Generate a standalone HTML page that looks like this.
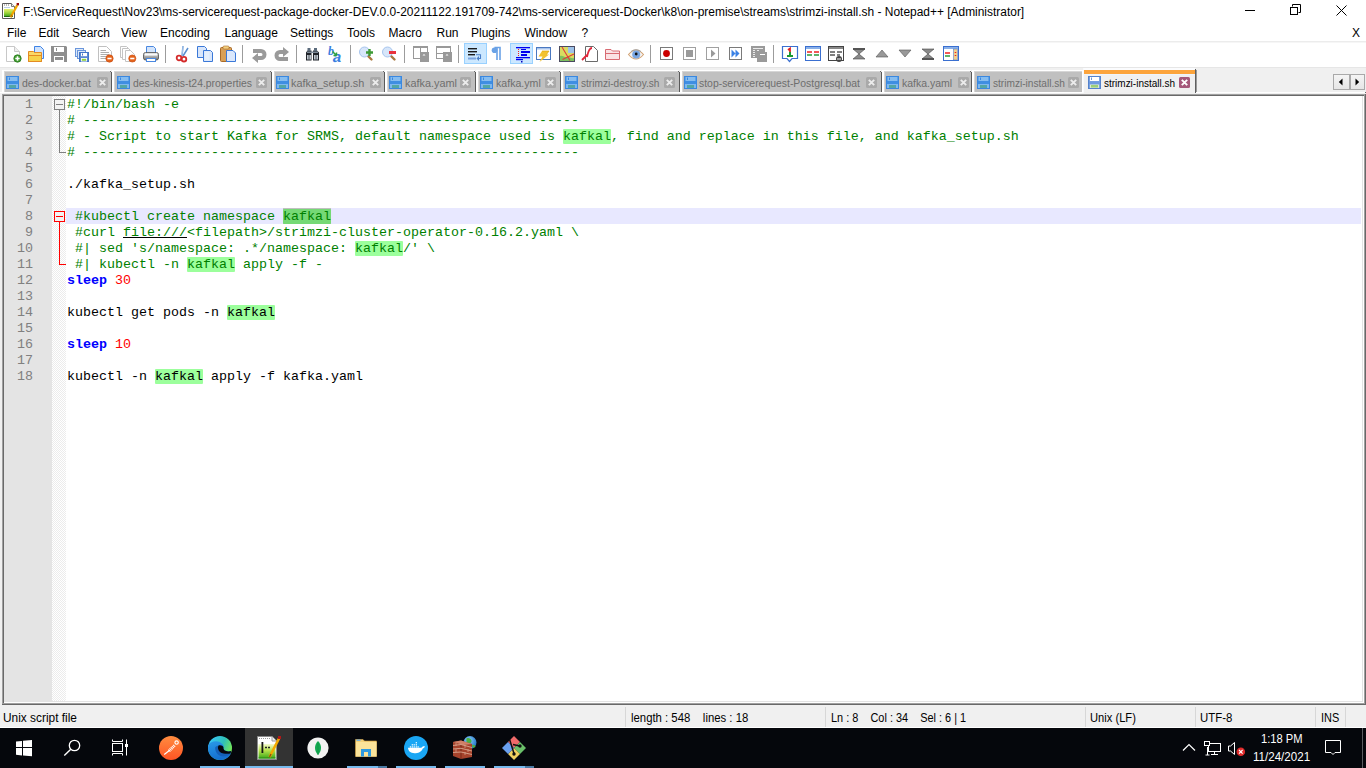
<!DOCTYPE html><html><head><meta charset="utf-8"><style>
*{margin:0;padding:0;box-sizing:border-box}
html,body{width:1366px;height:768px;overflow:hidden;background:#fff}
body{position:relative;font-family:"Liberation Sans",sans-serif;font-size:12px;color:#000}
.t{position:absolute;white-space:pre;line-height:14px}
.m{position:absolute;white-space:pre;font-family:"Liberation Mono",monospace;font-size:13.333px;line-height:16px}
svg{position:absolute;overflow:visible}
</style></head><body>
<div class="t" style="left:23px;top:5px;transform-origin:0 0;transform:scaleX(0.995)">F:\ServiceRequest\Nov23\ms-servicerequest-package-docker-DEV.0.0-20211122.191709-742\ms-servicerequest-Docker\k8\on-premise\streams\strimzi-install.sh - Notepad++ [Administrator]</div>
<svg style="left:2px;top:3px" width="18" height="17" viewBox="0 0 18 17">
<defs><linearGradient id="tg" x1="0" y1="0" x2="0" y2="1"><stop offset="0" stop-color="#e8f070"/><stop offset="0.5" stop-color="#9bd43a"/><stop offset="1" stop-color="#2f9a1a"/></linearGradient></defs>
<path d="M0.5 0.5H9.5L12.5 3.5V15.5H0.5Z" fill="#fff" stroke="#5a5a5a"/>
<path d="M9.5 0.5V3.5H12.5" fill="#f0f0f0" stroke="#7a7a7a"/>
<path d="M2 2H8" stroke="#777" stroke-dasharray="1 1"/>
<path d="M2 4.5H8" stroke="#bcd0e8"/>
<rect x="2" y="6" width="9" height="8" fill="url(#tg)"/>
<rect x="2" y="13" width="9" height="1" fill="#1f6a10"/>
<path d="M8.6 14.2L15.2 2.2" stroke="#f2a900" stroke-width="2.3"/>
<path d="M8.6 14.2L10 11.6" stroke="#c47a00" stroke-width="1.5"/>
<rect x="14.6" y="0" width="2.4" height="2.4" fill="#9a0a0a"/>
</svg>
<div style="position:absolute;left:1245px;top:10px;width:10px;height:1px;background:#000"></div>
<div style="position:absolute;left:1290px;top:7px;width:8px;height:8px;border:1px solid #000"></div>
<svg style="left:1290px;top:4px" width="12" height="12"><path d="M2.5 2.5V0.5H10.5V8.5H8.5" fill="none" stroke="#000"/></svg>
<svg style="left:1336px;top:5px" width="11" height="11"><path d="M0.5 0.5L10.5 10.5M10.5 0.5L0.5 10.5" stroke="#000" stroke-width="1"/></svg>
<div class="t" style="left:7px;top:26px;">File</div>
<div class="t" style="left:38.5px;top:26px;">Edit</div>
<div class="t" style="left:72px;top:26px;">Search</div>
<div class="t" style="left:121px;top:26px;">View</div>
<div class="t" style="left:160px;top:26px;">Encoding</div>
<div class="t" style="left:224.5px;top:26px;">Language</div>
<div class="t" style="left:290px;top:26px;">Settings</div>
<div class="t" style="left:347px;top:26px;">Tools</div>
<div class="t" style="left:388.5px;top:26px;">Macro</div>
<div class="t" style="left:436.5px;top:26px;">Run</div>
<div class="t" style="left:471px;top:26px;">Plugins</div>
<div class="t" style="left:524.5px;top:26px;">Window</div>
<div class="t" style="left:581.5px;top:26px;">?</div>
<div class="t" style="left:1352px;top:26px;">X</div>
<div style="position:absolute;left:0px;top:41px;width:1366px;height:1px;background:#ececec"></div>
<div style="position:absolute;left:0px;top:42px;width:1366px;height:1px;background:#f6f6f6"></div>
<div style="position:absolute;left:0px;top:67px;width:1366px;height:1px;background:#e6e6e6"></div>
<div style="position:absolute;left:165px;top:45px;width:1px;height:18px;background:#9c9c9c"></div>
<div style="position:absolute;left:242px;top:45px;width:1px;height:18px;background:#9c9c9c"></div>
<div style="position:absolute;left:296px;top:45px;width:1px;height:18px;background:#9c9c9c"></div>
<div style="position:absolute;left:350px;top:45px;width:1px;height:18px;background:#9c9c9c"></div>
<div style="position:absolute;left:404px;top:45px;width:1px;height:18px;background:#9c9c9c"></div>
<div style="position:absolute;left:458px;top:45px;width:1px;height:18px;background:#9c9c9c"></div>
<div style="position:absolute;left:650px;top:45px;width:1px;height:18px;background:#9c9c9c"></div>
<div style="position:absolute;left:773px;top:45px;width:1px;height:18px;background:#9c9c9c"></div>
<div style="position:absolute;left:464px;top:43px;width:23px;height:21px;background:#cce8ff;border:1px solid #99d1ff"></div>
<div style="position:absolute;left:510px;top:43px;width:23px;height:21px;background:#cce8ff;border:1px solid #99d1ff"></div>
<svg style="left:6px;top:46px" width="16" height="16" viewBox="0 0 16 16"><path d="M0.5 0.5H8.5L13.5 5.5V15.5H0.5Z" fill="#fff" stroke="#c8c8c8"/><path d="M8.5 0.5V5.5H13.5" fill="#eee" stroke="#c8c8c8"/><circle cx="11.5" cy="12.5" r="3.7" fill="#3f9b2d" stroke="#2b7a1e" stroke-width="0.8"/><path d="M11.5 10.3V14.7M9.3 12.5H13.7" stroke="#fff" stroke-width="1.6"/></svg>
<svg style="left:28px;top:46px" width="16" height="16" viewBox="0 0 16 16"><path d="M6.5 0.5H12.5L15.5 3.5V12.5H6.5Z" fill="#cfe2fc" stroke="#3d83e6"/><path d="M0.5 5.5H5.5L6.5 6.5H13.5V15.5H0.5Z" fill="#fbd866" stroke="#e38b22"/><rect x="1" y="9" width="12" height="6" fill="#f6d24a"/><path d="M0.5 9.5H13.5V15.5H0.5Z" fill="none" stroke="#e38b22"/></svg>
<svg style="left:51px;top:46px" width="16" height="16" viewBox="0 0 16 16"><path d="M0 0H15L16 1V16H0Z" fill="#8e8e8e"/><rect x="3" y="1" width="10" height="5" fill="#fff"/><rect x="5" y="2" width="1" height="3" fill="#8e8e8e"/><rect x="3" y="10" width="10" height="6" fill="#fff"/><rect x="4" y="11" width="8" height="3" fill="#8e8e8e"/></svg>
<svg style="left:74px;top:47px" width="16" height="16" viewBox="0 0 16 16"><rect x="1.5" y="1.5" width="8" height="8" fill="#dbe7f8" stroke="#6a96dc"/><rect x="3.5" y="3.5" width="8" height="8" fill="#dbe7f8" stroke="#6a96dc"/><rect x="5.5" y="5.5" width="9" height="9" fill="#5a88d4" stroke="#4476c8"/><rect x="7" y="6" width="6" height="3.2" fill="#fff"/><rect x="8" y="6.5" width="1" height="2" fill="#4476c8"/><rect x="7" y="11" width="6" height="3.5" fill="#fff"/><rect x="7.8" y="11.8" width="4.4" height="2" fill="#8ed040"/></svg>
<svg style="left:98px;top:46px" width="16" height="16" viewBox="0 0 16 16"><path d="M0.5 0.5H8.5L13.5 5.5V15.5H0.5Z" fill="#fff" stroke="#c0c0c0"/><path d="M2.5 4.5H8M2.5 6.5H11M2.5 8.5H11M2.5 10.5H8M2.5 12.5H8" stroke="#8a8a8a" stroke-width="0.7" fill="none"/><circle cx="11.5" cy="12.5" r="3.7" fill="#e4621a" stroke="#c84c10" stroke-width="0.6"/><path d="M9.4 12.5H13.6" stroke="#fff" stroke-width="1.6"/></svg>
<svg style="left:120px;top:46px" width="16" height="16" viewBox="0 0 16 16"><path d="M0.5 0.5H6.5L9.5 3.5V11.5H0.5Z" fill="#fff" stroke="#c4c4c4"/><path d="M2.5 2.5H8.5L11.5 5.5V13.5H2.5Z" fill="#fff" stroke="#c4c4c4"/><path d="M5.5 4.5H10.5L14.5 8.5V15.5H5.5Z" fill="#fff" stroke="#c4c4c4"/><circle cx="12.3" cy="12.5" r="3.6" fill="#e4621a" stroke="#c84c10" stroke-width="0.6"/><path d="M10.2 12.5H14.4" stroke="#fff" stroke-width="1.6"/></svg>
<svg style="left:143px;top:46px" width="16" height="16" viewBox="0 0 16 16"><defs><linearGradient id="prg" x1="0" y1="0" x2="0" y2="1"><stop offset="0" stop-color="#f4f4f4"/><stop offset="0.5" stop-color="#b0b0b0"/><stop offset="1" stop-color="#707070"/></linearGradient></defs><path d="M3.5 0.5H10.5L12.5 2.5V8H3.5Z" fill="#d3e4fb" stroke="#4a88e0"/><rect x="0.5" y="6.5" width="15" height="7.5" rx="2" fill="url(#prg)" stroke="#4a4a4a" stroke-width="0.8"/><rect x="2" y="8" width="12" height="1.5" fill="#fafafa"/><rect x="3.5" y="12.5" width="9" height="3" fill="#fff" stroke="#4a88e0"/></svg>
<svg style="left:176px;top:46px" width="16" height="16" viewBox="0 0 16 16"><path d="M6 10L7 0M7 10L12 2" stroke="#5a8fd0" stroke-width="1.5"/><path d="M6 10L7 0" stroke="#d8e8fa" stroke-width="0.6"/><circle cx="3" cy="12" r="2.3" fill="none" stroke="#d42b2b" stroke-width="1.8"/><circle cx="8" cy="13.2" r="2.3" fill="none" stroke="#d42b2b" stroke-width="1.8"/></svg>
<svg style="left:197px;top:46px" width="16" height="16" viewBox="0 0 16 16"><path d="M0.5 0.5H7.5L9.5 2.5V11.5H0.5Z" fill="#d8e6fb" stroke="#3a78d8"/><path d="M6.5 4.5H13.5L15.5 6.5V15.5H6.5Z" fill="#d8e6fb" stroke="#3a78d8"/><rect x="7.5" y="5.5" width="5" height="9" fill="#fff" opacity="0.35"/></svg>
<svg style="left:220px;top:46px" width="16" height="16" viewBox="0 0 16 16"><rect x="0.5" y="1.5" width="11" height="14" rx="1" fill="#d9a056" stroke="#a86a28"/><rect x="3" y="0" width="6" height="3" rx="1" fill="#f2d080" stroke="#a86a28" stroke-width="0.6"/><path d="M6.5 4.5H13L15.5 7V15.5H6.5Z" fill="#dbe8fc" stroke="#3a78d8"/></svg>
<svg style="left:251px;top:47px" width="16" height="16" viewBox="0 0 16 16"><path d="M2 2H10A5.5 5.5 0 0 1 10 13H7V16L1 11L7 6V9H10A1.5 1.5 0 0 0 10 6H2Z" fill="#9a9a9a"/></svg>
<svg style="left:274px;top:47px" width="16" height="16" viewBox="0 0 16 16"><path d="M14 14H6A5.5 5.5 0 0 1 6 3H9V0L15 5L9 10V7H6A1.5 1.5 0 0 0 6 10H14Z" fill="#9a9a9a"/></svg>
<svg style="left:305px;top:47px" width="16" height="16" viewBox="0 0 16 16"><path d="M1 5.5L2.5 3.5H6.5V13.5H1Z M8 3.5H12L14 5.5V13.5H8Z" fill="#20242a"/><rect x="2.5" y="1" width="3" height="3" fill="#5b6b7c"/><rect x="9" y="1" width="3" height="3" fill="#5b6b7c"/><rect x="2" y="4.5" width="11" height="1.5" fill="#7d8a98"/><rect x="2" y="8" width="4" height="4.5" fill="#c0c8d0"/><rect x="9" y="8" width="4" height="4.5" fill="#c0c8d0"/><path d="M4 8V12.5M11 8V12.5" stroke="#3a3f46" stroke-width="0.8"/></svg>
<svg style="left:328px;top:46px" width="16" height="16" viewBox="0 0 16 16"><text x="0" y="8.5" font-family="Liberation Serif" font-style="italic" font-weight="bold" font-size="12" fill="#3a7fe0">b</text><text x="5" y="16" font-family="Liberation Sans" font-weight="bold" font-size="15" fill="#3a7fe0" transform="skewX(-12) translate(2.5 0)">a</text><path d="M4.5 5.5L8.5 9.5M8.5 9.5V6.5M8.5 9.5H5.5" stroke="#2ea040" stroke-width="1.5" fill="none"/></svg>
<svg style="left:359px;top:46px" width="16" height="16" viewBox="0 0 16 16"><path d="M9 10L12.5 13.5" stroke="#a9773e" stroke-width="2.4" stroke-linecap="round"/><circle cx="5.5" cy="6" r="5" fill="#d7e6fa" stroke="#a7c5ee"/><path d="M10.5 3V10M7 6.5H14" stroke="#3d9a35" stroke-width="2.4"/></svg>
<svg style="left:382px;top:46px" width="16" height="16" viewBox="0 0 16 16"><path d="M9 10L12.5 13.5" stroke="#a9773e" stroke-width="2.4" stroke-linecap="round"/><circle cx="5.5" cy="6" r="5" fill="#d7e6fa" stroke="#a7c5ee"/><rect x="7" y="5" width="7" height="3" fill="#e8323c"/></svg>
<svg style="left:413px;top:46px" width="16" height="16" viewBox="0 0 16 16"><rect x="0.5" y="0.5" width="14" height="12" fill="#fff" stroke="#999"/><rect x="0" y="0" width="15" height="2" fill="#999"/><path d="M7.5 2V13" stroke="#999"/><rect x="7" y="6" width="9" height="10" fill="#999"/><path d="M9.5 9.5L11 8L12.5 9.5Z" fill="#fff"/></svg>
<svg style="left:436px;top:46px" width="16" height="16" viewBox="0 0 16 16"><rect x="0.5" y="0.5" width="14" height="12" fill="#fff" stroke="#999"/><rect x="0" y="0" width="15" height="2" fill="#999"/><path d="M0 7.5H15" stroke="#999"/><rect x="7" y="6" width="9" height="10" fill="#999"/><path d="M9.5 9.5L11 8L12.5 9.5Z" fill="#fff"/></svg>
<svg style="left:467px;top:45px" width="16" height="16" viewBox="0 0 16 16"><rect x="1" y="3" width="9" height="1.4" fill="#1a1a1a"/><rect x="1" y="6" width="9" height="1.4" fill="#1a1a1a"/><rect x="1" y="9" width="7" height="1.4" fill="#1a1a1a"/><path d="M9 9.7H13.5V13.5H11" stroke="#4a7fc8" stroke-width="1.1" fill="none"/><path d="M9.5 13.5L12 11V16Z" fill="#4a7fc8"/><rect x="1" y="12.5" width="8" height="2" fill="#7aa4e0"/></svg>
<svg style="left:490px;top:46px" width="16" height="16" viewBox="0 0 16 16"><path d="M4.5 1.5H10V14M7 1.5V14" stroke="#6aa2e6" stroke-width="1.6" fill="none"/><circle cx="4.5" cy="4.2" r="2.8" fill="#6aa2e6"/></svg>
<svg style="left:513px;top:46px" width="16" height="16" viewBox="0 0 16 16"><rect x="3" y="1" width="14" height="1.3" fill="#0000f0"/><rect x="8" y="3" width="5" height="1" fill="#0000f0"/><rect x="8" y="5" width="9" height="2" fill="#0000f0"/><rect x="8" y="8" width="6" height="2" fill="#0000f0"/><rect x="3" y="11" width="14" height="1.3" fill="#0000f0"/><rect x="3" y="13" width="7" height="1.2" fill="#0000f0"/><rect x="8" y="15" width="1.5" height="1.5" fill="#0000c0"/><path d="M5.5 3V10" stroke="#e22" stroke-width="1" stroke-dasharray="1 1"/></svg>
<svg style="left:536px;top:47px" width="16" height="16" viewBox="0 0 16 16"><rect x="0.5" y="0.5" width="14" height="12" fill="#fff" stroke="#4a78c0"/><rect x="1" y="1" width="13" height="1.5" fill="#a8c4ec"/><path d="M6 4H13L10.5 7.5H13L3.5 15L6.5 9.5H2.5Z" fill="#f2c230"/><path d="M6 4H13L10.5 7.5" stroke="#d9a000" stroke-width="0.6" fill="none"/></svg>
<svg style="left:559px;top:46px" width="16" height="16" viewBox="0 0 16 16"><rect x="0.5" y="0.5" width="15" height="15" fill="#d8dc60" stroke="#4a4a60"/><rect x="9" y="1" width="6" height="6" fill="#9ec2e8"/><path d="M1 10C4 9 6 12 8 11C10 10 12 13 15 12V15H1Z" fill="#7cc060"/><path d="M3 1L11 14.5M3.5 13.5L15 8" stroke="#e23b3b" stroke-width="1.1"/></svg>
<svg style="left:582px;top:46px" width="16" height="16" viewBox="0 0 16 16"><path d="M3.5 0.5H11.5L15.5 4.5V15.5H3.5Z" fill="#fff" stroke="#6a6a6a"/><path d="M0 14L5 9M5 11C6 6 7 2 10 2" stroke="#e0283a" stroke-width="1.8" fill="none"/></svg>
<svg style="left:605px;top:48px" width="16" height="16" viewBox="0 0 16 16"><path d="M0.5 1.5H6L7.5 3H14.5V11.5H0.5Z" fill="#fbe2e4" stroke="#d86a72"/><path d="M0.5 5.5H14.5" stroke="#d86a72"/></svg>
<svg style="left:628px;top:48px" width="16" height="16" viewBox="0 0 16 16"><path d="M0.5 6.5Q8 -2.5 15.5 6.5Q8 15.5 0.5 6.5Z" fill="#f4f4f4" stroke="#d2a070" stroke-width="1.1"/><path d="M3 3.5Q8 0 13 3.5" stroke="#a0a0a0" fill="none"/><circle cx="8.2" cy="6.5" r="4" fill="#7aa6e2"/><circle cx="8.2" cy="6" r="1.4" fill="#111"/></svg>
<svg style="left:659px;top:46px" width="16" height="16" viewBox="0 0 16 16"><rect x="1.5" y="1.5" width="12" height="12" fill="#fff" stroke="#7a7a7a"/><circle cx="7.5" cy="7.5" r="3.4" fill="#cc0000"/></svg>
<svg style="left:682px;top:46px" width="16" height="16" viewBox="0 0 16 16"><rect x="1.5" y="1.5" width="12" height="12" fill="#fff" stroke="#a0a0a0"/><rect x="4" y="4" width="7" height="7" fill="#9a9a9a"/></svg>
<svg style="left:705px;top:46px" width="16" height="16" viewBox="0 0 16 16"><rect x="1.5" y="1.5" width="12" height="12" fill="#fff" stroke="#a0a0a0"/><path d="M6 3.5L10.5 7.5L6 11.5Z" fill="#9a9a9a"/></svg>
<svg style="left:728px;top:46px" width="16" height="16" viewBox="0 0 16 16"><rect x="1.5" y="1.5" width="12" height="12" fill="#fff" stroke="#7a7a7a"/><path d="M3.5 3.5L7.5 7.5L3.5 11.5ZM7.5 3.5L11.5 7.5L7.5 11.5Z" fill="#3a82e6"/></svg>
<svg style="left:751px;top:46px" width="16" height="16" viewBox="0 0 16 16"><rect x="0" y="0" width="14" height="12" fill="#9a9a9a"/><path d="M2 2.5H12M2 4.5H4M6 4.5H8M2 6.5H4M2 8.5H4M2 10.5H4" stroke="#fff" stroke-width="0.8"/><rect x="6" y="6" width="10" height="10" fill="#9a9a9a"/><path d="M9 8.5H14" stroke="#fff" stroke-width="1"/></svg>
<svg style="left:782px;top:46px" width="16" height="16" viewBox="0 0 16 16"><path d="M0.5 0.5H15.5V12.5H10L7.5 15.5L5 12.5H0.5Z" fill="#fff" stroke="#3a6fd0" stroke-width="1.2"/><path d="M6 4L8 2.5V6" stroke="#e02020" stroke-width="1.8" fill="none"/><rect x="7" y="6" width="2" height="3" fill="#1a9a30"/><rect x="5" y="9" width="6" height="2" fill="#1a9a30"/></svg>
<svg style="left:805px;top:46px" width="16" height="16" viewBox="0 0 16 16"><rect x="0.5" y="0.5" width="15" height="14" fill="#fff" stroke="#3a6fd0"/><rect x="1" y="1" width="14" height="2" fill="#8ab0e8"/><path d="M2 6H7M9 6H14" stroke="#e22" stroke-width="1.5"/><path d="M2 9H7M9 9H14" stroke="#2a9a3a" stroke-width="1.5"/></svg>
<svg style="left:828px;top:46px" width="16" height="16" viewBox="0 0 16 16"><rect x="0.5" y="0.5" width="15" height="14" fill="#fff" stroke="#444"/><rect x="1" y="1" width="14" height="2" fill="#888"/><path d="M2 6H7M9 6H14M2 9H7M9 9H12" stroke="#555" stroke-width="1.5"/><circle cx="11" cy="13" r="3" fill="#444"/><path d="M9 13H13" stroke="#fff"/></svg>
<svg style="left:852px;top:46px" width="16" height="16" viewBox="0 0 16 16"><path d="M1 3H13L7 8L13 13H1L7 8Z" fill="#8a8a8a" stroke="#444" stroke-width="0.6"/><rect x="1" y="2" width="12" height="2" fill="#555"/></svg>
<svg style="left:875px;top:46px" width="16" height="16" viewBox="0 0 16 16"><path d="M1 11L7 4L13 11Z" fill="#999" stroke="#555" stroke-width="0.6"/></svg>
<svg style="left:898px;top:46px" width="16" height="16" viewBox="0 0 16 16"><path d="M1 4L7 11L13 4Z" fill="#999" stroke="#555" stroke-width="0.6"/></svg>
<svg style="left:921px;top:46px" width="16" height="16" viewBox="0 0 16 16"><path d="M1 3H13L7 8L13 13H1L7 8Z" fill="#8a8a8a" stroke="#444" stroke-width="0.6"/><rect x="1" y="12" width="12" height="2" fill="#555"/></svg>
<svg style="left:943px;top:46px" width="16" height="16" viewBox="0 0 16 16"><rect x="0.5" y="0.5" width="15" height="14" fill="#fff" stroke="#3a6fd0"/><rect x="1" y="1" width="14" height="2" fill="#8ab0e8"/><rect x="10.5" y="3" width="4" height="11" fill="#f5d08a" stroke="#3a6fd0" stroke-width="0.5"/><path d="M2 7H7" stroke="#e22" stroke-width="1.5"/><path d="M2 10H7" stroke="#2a9a3a" stroke-width="1.5"/><path d="M12.5 6V7M12.5 9V10" stroke="#e22" stroke-width="1.5"/></svg>
<div style="position:absolute;left:0px;top:68px;width:1366px;height:26px;background:#f0f0f0"></div>
<div style="position:absolute;left:0px;top:92px;width:1366px;height:1px;background:#fff"></div>
<div style="position:absolute;left:2px;top:70px;width:109px;height:1px;background:#fff"></div>
<div style="position:absolute;left:2px;top:70px;width:2px;height:22px;background:#fff"></div>
<div style="position:absolute;left:4px;top:71px;width:107px;height:1px;background:#d6d6d6"></div>
<div style="position:absolute;left:4px;top:72px;width:1px;height:20px;background:#d6d6d6"></div>
<div style="position:absolute;left:5px;top:72px;width:106px;height:20px;background:#c0c0c0"></div>
<div style="position:absolute;left:111px;top:72px;width:1px;height:20px;background:#5a5a5a"></div>
<div style="position:absolute;left:110px;top:71px;width:1px;height:1px;background:#6a6a6a"></div>
<svg style="left:6px;top:76px" width="13" height="13" viewBox="0 0 13 13"><rect x="0" y="0" width="13" height="13" fill="#3a88e0"/><rect x="1.5" y="1" width="10" height="4" fill="#86bdf0"/><rect x="3" y="1.5" width="1" height="2.5" fill="#3a88e0"/><rect x="1" y="5" width="11" height="3" fill="#3f8ee2"/><rect x="1" y="8" width="11" height="4" fill="#7fb8ee"/><rect x="3" y="9" width="7" height="3" fill="#52a6a6"/></svg>
<svg style="left:97px;top:77px" width="11" height="11" viewBox="0 0 11 11"><rect x="0" y="0" width="11" height="11" rx="1.5" fill="#a9a9a9"/><path d="M2.8 2.8L8.2 8.2M8.2 2.8L2.8 8.2" stroke="#ececec" stroke-width="1.9"/></svg>
<div style="position:absolute;left:112px;top:70px;width:159px;height:1px;background:#fff"></div>
<div style="position:absolute;left:112px;top:70px;width:2px;height:22px;background:#fff"></div>
<div style="position:absolute;left:114px;top:71px;width:157px;height:1px;background:#d6d6d6"></div>
<div style="position:absolute;left:114px;top:72px;width:1px;height:20px;background:#d6d6d6"></div>
<div style="position:absolute;left:115px;top:72px;width:156px;height:20px;background:#c0c0c0"></div>
<div style="position:absolute;left:271px;top:72px;width:1px;height:20px;background:#5a5a5a"></div>
<div style="position:absolute;left:270px;top:71px;width:1px;height:1px;background:#6a6a6a"></div>
<svg style="left:117px;top:76px" width="13" height="13" viewBox="0 0 13 13"><rect x="0" y="0" width="13" height="13" fill="#3a88e0"/><rect x="1.5" y="1" width="10" height="4" fill="#86bdf0"/><rect x="3" y="1.5" width="1" height="2.5" fill="#3a88e0"/><rect x="1" y="5" width="11" height="3" fill="#3f8ee2"/><rect x="1" y="8" width="11" height="4" fill="#7fb8ee"/><rect x="3" y="9" width="7" height="3" fill="#52a6a6"/></svg>
<svg style="left:256px;top:77px" width="11" height="11" viewBox="0 0 11 11"><rect x="0" y="0" width="11" height="11" rx="1.5" fill="#a9a9a9"/><path d="M2.8 2.8L8.2 8.2M8.2 2.8L2.8 8.2" stroke="#ececec" stroke-width="1.9"/></svg>
<div style="position:absolute;left:272px;top:70px;width:112px;height:1px;background:#fff"></div>
<div style="position:absolute;left:272px;top:70px;width:2px;height:22px;background:#fff"></div>
<div style="position:absolute;left:274px;top:71px;width:110px;height:1px;background:#d6d6d6"></div>
<div style="position:absolute;left:274px;top:72px;width:1px;height:20px;background:#d6d6d6"></div>
<div style="position:absolute;left:275px;top:72px;width:109px;height:20px;background:#c0c0c0"></div>
<div style="position:absolute;left:384px;top:72px;width:1px;height:20px;background:#5a5a5a"></div>
<div style="position:absolute;left:383px;top:71px;width:1px;height:1px;background:#6a6a6a"></div>
<svg style="left:276px;top:76px" width="13" height="13" viewBox="0 0 13 13"><rect x="0" y="0" width="13" height="13" fill="#3a88e0"/><rect x="1.5" y="1" width="10" height="4" fill="#86bdf0"/><rect x="3" y="1.5" width="1" height="2.5" fill="#3a88e0"/><rect x="1" y="5" width="11" height="3" fill="#3f8ee2"/><rect x="1" y="8" width="11" height="4" fill="#7fb8ee"/><rect x="3" y="9" width="7" height="3" fill="#52a6a6"/></svg>
<svg style="left:370px;top:77px" width="11" height="11" viewBox="0 0 11 11"><rect x="0" y="0" width="11" height="11" rx="1.5" fill="#a9a9a9"/><path d="M2.8 2.8L8.2 8.2M8.2 2.8L2.8 8.2" stroke="#ececec" stroke-width="1.9"/></svg>
<div style="position:absolute;left:385px;top:70px;width:90px;height:1px;background:#fff"></div>
<div style="position:absolute;left:385px;top:70px;width:2px;height:22px;background:#fff"></div>
<div style="position:absolute;left:387px;top:71px;width:88px;height:1px;background:#d6d6d6"></div>
<div style="position:absolute;left:387px;top:72px;width:1px;height:20px;background:#d6d6d6"></div>
<div style="position:absolute;left:388px;top:72px;width:87px;height:20px;background:#c0c0c0"></div>
<div style="position:absolute;left:475px;top:72px;width:1px;height:20px;background:#5a5a5a"></div>
<div style="position:absolute;left:474px;top:71px;width:1px;height:1px;background:#6a6a6a"></div>
<svg style="left:389px;top:76px" width="13" height="13" viewBox="0 0 13 13"><rect x="0" y="0" width="13" height="13" fill="#3a88e0"/><rect x="1.5" y="1" width="10" height="4" fill="#86bdf0"/><rect x="3" y="1.5" width="1" height="2.5" fill="#3a88e0"/><rect x="1" y="5" width="11" height="3" fill="#3f8ee2"/><rect x="1" y="8" width="11" height="4" fill="#7fb8ee"/><rect x="3" y="9" width="7" height="3" fill="#52a6a6"/></svg>
<svg style="left:460px;top:77px" width="11" height="11" viewBox="0 0 11 11"><rect x="0" y="0" width="11" height="11" rx="1.5" fill="#a9a9a9"/><path d="M2.8 2.8L8.2 8.2M8.2 2.8L2.8 8.2" stroke="#ececec" stroke-width="1.9"/></svg>
<div style="position:absolute;left:476px;top:70px;width:84px;height:1px;background:#fff"></div>
<div style="position:absolute;left:476px;top:70px;width:2px;height:22px;background:#fff"></div>
<div style="position:absolute;left:478px;top:71px;width:82px;height:1px;background:#d6d6d6"></div>
<div style="position:absolute;left:478px;top:72px;width:1px;height:20px;background:#d6d6d6"></div>
<div style="position:absolute;left:479px;top:72px;width:81px;height:20px;background:#c0c0c0"></div>
<div style="position:absolute;left:560px;top:72px;width:1px;height:20px;background:#5a5a5a"></div>
<div style="position:absolute;left:559px;top:71px;width:1px;height:1px;background:#6a6a6a"></div>
<svg style="left:480px;top:76px" width="13" height="13" viewBox="0 0 13 13"><rect x="0" y="0" width="13" height="13" fill="#3a88e0"/><rect x="1.5" y="1" width="10" height="4" fill="#86bdf0"/><rect x="3" y="1.5" width="1" height="2.5" fill="#3a88e0"/><rect x="1" y="5" width="11" height="3" fill="#3f8ee2"/><rect x="1" y="8" width="11" height="4" fill="#7fb8ee"/><rect x="3" y="9" width="7" height="3" fill="#52a6a6"/></svg>
<svg style="left:545px;top:77px" width="11" height="11" viewBox="0 0 11 11"><rect x="0" y="0" width="11" height="11" rx="1.5" fill="#a9a9a9"/><path d="M2.8 2.8L8.2 8.2M8.2 2.8L2.8 8.2" stroke="#ececec" stroke-width="1.9"/></svg>
<div style="position:absolute;left:561px;top:70px;width:118px;height:1px;background:#fff"></div>
<div style="position:absolute;left:561px;top:70px;width:2px;height:22px;background:#fff"></div>
<div style="position:absolute;left:563px;top:71px;width:116px;height:1px;background:#d6d6d6"></div>
<div style="position:absolute;left:563px;top:72px;width:1px;height:20px;background:#d6d6d6"></div>
<div style="position:absolute;left:564px;top:72px;width:115px;height:20px;background:#c0c0c0"></div>
<div style="position:absolute;left:679px;top:72px;width:1px;height:20px;background:#5a5a5a"></div>
<div style="position:absolute;left:678px;top:71px;width:1px;height:1px;background:#6a6a6a"></div>
<svg style="left:565px;top:76px" width="13" height="13" viewBox="0 0 13 13"><rect x="0" y="0" width="13" height="13" fill="#3a88e0"/><rect x="1.5" y="1" width="10" height="4" fill="#86bdf0"/><rect x="3" y="1.5" width="1" height="2.5" fill="#3a88e0"/><rect x="1" y="5" width="11" height="3" fill="#3f8ee2"/><rect x="1" y="8" width="11" height="4" fill="#7fb8ee"/><rect x="3" y="9" width="7" height="3" fill="#52a6a6"/></svg>
<svg style="left:664px;top:77px" width="11" height="11" viewBox="0 0 11 11"><rect x="0" y="0" width="11" height="11" rx="1.5" fill="#a9a9a9"/><path d="M2.8 2.8L8.2 8.2M8.2 2.8L2.8 8.2" stroke="#ececec" stroke-width="1.9"/></svg>
<div style="position:absolute;left:680px;top:70px;width:201px;height:1px;background:#fff"></div>
<div style="position:absolute;left:680px;top:70px;width:2px;height:22px;background:#fff"></div>
<div style="position:absolute;left:682px;top:71px;width:199px;height:1px;background:#d6d6d6"></div>
<div style="position:absolute;left:682px;top:72px;width:1px;height:20px;background:#d6d6d6"></div>
<div style="position:absolute;left:683px;top:72px;width:198px;height:20px;background:#c0c0c0"></div>
<div style="position:absolute;left:881px;top:72px;width:1px;height:20px;background:#5a5a5a"></div>
<div style="position:absolute;left:880px;top:71px;width:1px;height:1px;background:#6a6a6a"></div>
<svg style="left:684px;top:76px" width="13" height="13" viewBox="0 0 13 13"><rect x="0" y="0" width="13" height="13" fill="#3a88e0"/><rect x="1.5" y="1" width="10" height="4" fill="#86bdf0"/><rect x="3" y="1.5" width="1" height="2.5" fill="#3a88e0"/><rect x="1" y="5" width="11" height="3" fill="#3f8ee2"/><rect x="1" y="8" width="11" height="4" fill="#7fb8ee"/><rect x="3" y="9" width="7" height="3" fill="#52a6a6"/></svg>
<svg style="left:866px;top:77px" width="11" height="11" viewBox="0 0 11 11"><rect x="0" y="0" width="11" height="11" rx="1.5" fill="#a9a9a9"/><path d="M2.8 2.8L8.2 8.2M8.2 2.8L2.8 8.2" stroke="#ececec" stroke-width="1.9"/></svg>
<div style="position:absolute;left:882px;top:70px;width:89px;height:1px;background:#fff"></div>
<div style="position:absolute;left:882px;top:70px;width:2px;height:22px;background:#fff"></div>
<div style="position:absolute;left:884px;top:71px;width:87px;height:1px;background:#d6d6d6"></div>
<div style="position:absolute;left:884px;top:72px;width:1px;height:20px;background:#d6d6d6"></div>
<div style="position:absolute;left:885px;top:72px;width:86px;height:20px;background:#c0c0c0"></div>
<div style="position:absolute;left:971px;top:72px;width:1px;height:20px;background:#5a5a5a"></div>
<div style="position:absolute;left:970px;top:71px;width:1px;height:1px;background:#6a6a6a"></div>
<svg style="left:886px;top:76px" width="13" height="13" viewBox="0 0 13 13"><rect x="0" y="0" width="13" height="13" fill="#3a88e0"/><rect x="1.5" y="1" width="10" height="4" fill="#86bdf0"/><rect x="3" y="1.5" width="1" height="2.5" fill="#3a88e0"/><rect x="1" y="5" width="11" height="3" fill="#3f8ee2"/><rect x="1" y="8" width="11" height="4" fill="#7fb8ee"/><rect x="3" y="9" width="7" height="3" fill="#52a6a6"/></svg>
<svg style="left:958px;top:77px" width="11" height="11" viewBox="0 0 11 11"><rect x="0" y="0" width="11" height="11" rx="1.5" fill="#a9a9a9"/><path d="M2.8 2.8L8.2 8.2M8.2 2.8L2.8 8.2" stroke="#ececec" stroke-width="1.9"/></svg>
<div style="position:absolute;left:972px;top:70px;width:110px;height:1px;background:#fff"></div>
<div style="position:absolute;left:972px;top:70px;width:2px;height:22px;background:#fff"></div>
<div style="position:absolute;left:974px;top:71px;width:108px;height:1px;background:#d6d6d6"></div>
<div style="position:absolute;left:974px;top:72px;width:1px;height:20px;background:#d6d6d6"></div>
<div style="position:absolute;left:975px;top:72px;width:107px;height:20px;background:#c0c0c0"></div>
<svg style="left:977px;top:76px" width="13" height="13" viewBox="0 0 13 13"><rect x="0" y="0" width="13" height="13" fill="#3a88e0"/><rect x="1.5" y="1" width="10" height="4" fill="#86bdf0"/><rect x="3" y="1.5" width="1" height="2.5" fill="#3a88e0"/><rect x="1" y="5" width="11" height="3" fill="#3f8ee2"/><rect x="1" y="8" width="11" height="4" fill="#7fb8ee"/><rect x="3" y="9" width="7" height="3" fill="#52a6a6"/></svg>
<svg style="left:1068px;top:77px" width="11" height="11" viewBox="0 0 11 11"><rect x="0" y="0" width="11" height="11" rx="1.5" fill="#a9a9a9"/><path d="M2.8 2.8L8.2 8.2M8.2 2.8L2.8 8.2" stroke="#ececec" stroke-width="1.9"/></svg>
<div style="position:absolute;left:1082px;top:70px;width:1px;height:22px;background:#fff"></div>
<div style="position:absolute;left:1083px;top:68px;width:112px;height:25px;background:#f0f0f0"></div>
<div style="position:absolute;left:1083px;top:68px;width:112px;height:2px;background:#fbfcfe"></div>
<div style="position:absolute;left:1083px;top:68px;width:1px;height:25px;background:#f8fafd"></div>
<div style="position:absolute;left:1084px;top:70px;width:111px;height:4px;background:#fca43c"></div>
<div style="position:absolute;left:1084px;top:74px;width:111px;height:1px;background:#eef4fc"></div>
<div style="position:absolute;left:1195px;top:69px;width:1px;height:24px;background:#5f5f5f"></div>
<div style="position:absolute;left:1196px;top:70px;width:1px;height:22px;background:#9a9a9a"></div>
<svg style="left:1088px;top:76px" width="13" height="13" viewBox="0 0 13 13"><rect x="0.5" y="0.5" width="12" height="12" fill="#79a3e0" stroke="#5482cc"/><rect x="2" y="1" width="9" height="4" fill="#fff"/><rect x="3" y="1.5" width="1" height="2.5" fill="#6a96d8"/><rect x="1" y="5.5" width="11" height="2.5" fill="#6d9ae0"/><rect x="2" y="8.5" width="9" height="3.5" fill="#dcebd0"/><rect x="3" y="9" width="7" height="2.5" fill="#9ccf78"/></svg>
<svg style="left:1179px;top:77px" width="11" height="11" viewBox="0 0 11 11"><rect x="0" y="0" width="11" height="11" rx="1.5" fill="#a5587a"/><path d="M2.8 2.8L8.2 8.2M8.2 2.8L2.8 8.2" stroke="#fff" stroke-width="1.9"/></svg>
<div class="t" style="left:22px;top:76px;font-size:10.5px;color:#6e6e6e;transform-origin:0 0;transform:scaleX(1.0)">des-docker.bat</div>
<div class="t" style="left:132.5px;top:76px;font-size:10.5px;color:#6e6e6e;transform-origin:0 0;transform:scaleX(0.99)">des-kinesis-t24.properties</div>
<div class="t" style="left:291px;top:76px;font-size:10.5px;color:#6e6e6e;transform-origin:0 0;transform:scaleX(1.037)">kafka_setup.sh</div>
<div class="t" style="left:404.6px;top:76px;font-size:10.5px;color:#6e6e6e;transform-origin:0 0;transform:scaleX(1.037)">kafka.yaml</div>
<div class="t" style="left:496px;top:76px;font-size:10.5px;color:#6e6e6e;transform-origin:0 0;transform:scaleX(1.01)">kafka.yml</div>
<div class="t" style="left:581px;top:76px;font-size:10.5px;color:#6e6e6e;transform-origin:0 0;transform:scaleX(0.963)">strimzi-destroy.sh</div>
<div class="t" style="left:699.3px;top:76px;font-size:10.5px;color:#6e6e6e;transform-origin:0 0;transform:scaleX(0.992)">stop-servicerequest-Postgresql.bat</div>
<div class="t" style="left:902px;top:76px;font-size:10.5px;color:#6e6e6e;transform-origin:0 0;transform:scaleX(1.0)">kafka.yaml</div>
<div class="t" style="left:992.6px;top:76px;font-size:10.5px;color:#6e6e6e;transform-origin:0 0;transform:scaleX(0.964)">strimzi-install.sh</div>
<div class="t" style="left:1103.8px;top:76px;font-size:10.5px;color:#000;transform-origin:0 0;transform:scaleX(0.951)">strimzi-install.sh</div>
<div style="position:absolute;left:1333px;top:74px;width:32px;height:16px;background:linear-gradient(#f4f4f4,#e6e6e6);border:1px solid #a9a9a9"></div>
<div style="position:absolute;left:1349px;top:74px;width:2px;height:16px;background:#a9a9a9"></div>
<svg style="left:1337px;top:77px" width="8" height="10"><path d="M5.5 1.5V8.5L1.8 5Z" fill="#000"/></svg>
<svg style="left:1353px;top:77px" width="8" height="10"><path d="M2.5 1.5V8.5L6.2 5Z" fill="#000"/></svg>
<div style="position:absolute;left:2px;top:94px;width:1364px;height:1px;background:#a0a0a0"></div>
<div style="position:absolute;left:2px;top:95px;width:1364px;height:1px;background:#696969"></div>
<div style="position:absolute;left:2px;top:94px;width:1px;height:611px;background:#a0a0a0"></div>
<div style="position:absolute;left:3px;top:95px;width:1px;height:610px;background:#696969"></div>
<div style="position:absolute;left:1362px;top:96px;width:1px;height:606px;background:#e3e3e3"></div>
<div style="position:absolute;left:1363px;top:96px;width:1px;height:607px;background:#fff"></div>
<div style="position:absolute;left:1364px;top:94px;width:1px;height:610px;background:#a0a0a0"></div>
<div style="position:absolute;left:1365px;top:92px;width:1px;height:613px;background:#696969"></div>
<div style="position:absolute;left:4px;top:701px;width:1359px;height:1px;background:#e3e3e3"></div>
<div style="position:absolute;left:4px;top:702px;width:1360px;height:1px;background:#fff"></div>
<div style="position:absolute;left:2px;top:703px;width:1363px;height:1px;background:#a0a0a0"></div>
<div style="position:absolute;left:2px;top:704px;width:1364px;height:1px;background:#696969"></div>
<div style="position:absolute;left:0px;top:93px;width:2px;height:612px;background:#f0f0f0"></div>
<div style="position:absolute;left:0px;top:93px;width:1366px;height:1px;background:#f0f0f0"></div>
<div style="position:absolute;left:4px;top:96px;width:48px;height:605px;background:#e4e4e4"></div>
<div style="position:absolute;left:52px;top:96px;width:14px;height:605px;background-color:#fff;background-image:conic-gradient(#ececec 25%,#fff 0 50%,#ececec 0 75%,#fff 0);background-size:2px 2px;background-position:0 1px"></div>
<div style="position:absolute;left:66px;top:208px;width:1295px;height:16px;background:#e8e8ff"></div>
<div class="m" style="left:25px;top:97px;color:#808080">1</div>
<div class="m" style="left:25px;top:113px;color:#808080">2</div>
<div class="m" style="left:25px;top:129px;color:#808080">3</div>
<div class="m" style="left:25px;top:145px;color:#808080">4</div>
<div class="m" style="left:25px;top:161px;color:#808080">5</div>
<div class="m" style="left:25px;top:177px;color:#808080">6</div>
<div class="m" style="left:25px;top:193px;color:#808080">7</div>
<div class="m" style="left:25px;top:209px;color:#808080">8</div>
<div class="m" style="left:25px;top:225px;color:#808080">9</div>
<div class="m" style="left:17px;top:241px;color:#808080">10</div>
<div class="m" style="left:17px;top:257px;color:#808080">11</div>
<div class="m" style="left:17px;top:273px;color:#808080">12</div>
<div class="m" style="left:17px;top:289px;color:#808080">13</div>
<div class="m" style="left:17px;top:305px;color:#808080">14</div>
<div class="m" style="left:17px;top:321px;color:#808080">15</div>
<div class="m" style="left:17px;top:337px;color:#808080">16</div>
<div class="m" style="left:17px;top:353px;color:#808080">17</div>
<div class="m" style="left:17px;top:369px;color:#808080">18</div>
<div style="position:absolute;left:563px;top:129px;width:48px;height:15px;background:#9cff9c;border-radius:1px"></div>
<div style="position:absolute;left:355px;top:241px;width:48px;height:15px;background:#9cff9c;border-radius:1px"></div>
<div style="position:absolute;left:187px;top:257px;width:48px;height:15px;background:#9cff9c;border-radius:1px"></div>
<div style="position:absolute;left:227px;top:305px;width:48px;height:15px;background:#9cff9c;border-radius:1px"></div>
<div style="position:absolute;left:155px;top:369px;width:48px;height:15px;background:#9cff9c;border-radius:1px"></div>
<div style="position:absolute;left:283px;top:208px;width:48px;height:16px;background:#c0c0c0"></div>
<div style="position:absolute;left:283px;top:209px;width:48px;height:15px;background:#75d975;border-radius:1px"></div>
<div class="m" style="left:67px;top:97px"><span style="color:#008000">#!/bin/bash -e</span></div>
<div class="m" style="left:67px;top:113px"><span style="color:#008000"># --------------------------------------------------------------</span></div>
<div class="m" style="left:67px;top:129px"><span style="color:#008000"># - Script to start Kafka for SRMS, default namespace used is kafkal, find and replace in this file, and kafka_setup.sh</span></div>
<div class="m" style="left:67px;top:145px"><span style="color:#008000"># --------------------------------------------------------------</span></div>
<div class="m" style="left:67px;top:177px"><span style="color:#000">./kafka_setup.sh</span></div>
<div class="m" style="left:67px;top:209px"><span style="color:#008000"> #kubectl create namespace kafkal</span></div>
<div class="m" style="left:67px;top:225px"><span style="color:#008000"> #curl </span><span style="color:#008000">file:///</span><span style="color:#008000">&lt;filepath&gt;/strimzi-cluster-operator-0.16.2.yaml \</span></div>
<div class="m" style="left:67px;top:241px"><span style="color:#008000"> #| sed &#x27;s/namespace: .*/namespace: kafkal/&#x27; \</span></div>
<div class="m" style="left:67px;top:257px"><span style="color:#008000"> #| kubectl -n kafkal apply -f -</span></div>
<div class="m" style="left:67px;top:273px"><span style="color:#0000ff;font-weight:bold">sleep</span><span style="color:#000"> </span><span style="color:#ff0000">30</span></div>
<div class="m" style="left:67px;top:305px"><span style="color:#000">kubectl get pods -n kafkal</span></div>
<div class="m" style="left:67px;top:337px"><span style="color:#0000ff;font-weight:bold">sleep</span><span style="color:#000"> </span><span style="color:#ff0000">10</span></div>
<div class="m" style="left:67px;top:369px"><span style="color:#000">kubectl -n kafkal apply -f kafka.yaml</span></div>
<div style="position:absolute;left:123px;top:237px;width:64px;height:1px;background:#000"></div>
<svg style="left:54px;top:99px" width="11" height="11"><rect x="0.5" y="0.5" width="10" height="10" fill="#f3f3f3" stroke="#808080"/><path d="M2 5.5H9" stroke="#808080"/></svg>
<div style="position:absolute;left:59px;top:110px;width:1px;height:43px;background:#808080"></div>
<div style="position:absolute;left:59px;top:152px;width:7px;height:1px;background:#808080"></div>
<svg style="left:54px;top:211px" width="11" height="11"><rect x="0.5" y="0.5" width="10" height="10" fill="#f3f3f3" stroke="#ff0000"/><path d="M2 5.5H9" stroke="#ff0000"/></svg>
<div style="position:absolute;left:59px;top:222px;width:1px;height:43px;background:#ff0000"></div>
<div style="position:absolute;left:59px;top:264px;width:7px;height:1px;background:#ff0000"></div>
<div style="position:absolute;left:0px;top:705px;width:1366px;height:22px;background:#f0f0f0"></div>
<div style="position:absolute;left:0px;top:727px;width:1366px;height:1px;background:#fff"></div>
<div style="position:absolute;left:625px;top:707px;width:1px;height:20px;background:#d7d7d7"></div>
<div style="position:absolute;left:825px;top:707px;width:1px;height:20px;background:#d7d7d7"></div>
<div style="position:absolute;left:1085px;top:707px;width:1px;height:20px;background:#d7d7d7"></div>
<div style="position:absolute;left:1195px;top:707px;width:1px;height:20px;background:#d7d7d7"></div>
<div style="position:absolute;left:1315px;top:707px;width:1px;height:20px;background:#d7d7d7"></div>
<div style="position:absolute;left:1345px;top:707px;width:1px;height:20px;background:#d7d7d7"></div>
<div class="t" style="left:3px;top:711px;transform-origin:0 0;transform:scaleX(0.99)">Unix script file</div>
<div class="t" style="left:631px;top:711px;transform-origin:0 0;transform:scaleX(0.945)">length : 548    lines : 18</div>
<div class="t" style="left:831px;top:711px;transform-origin:0 0;transform:scaleX(0.91)">Ln : 8    Col : 34    Sel : 6 | 1</div>
<div class="t" style="left:1090px;top:711px;transform-origin:0 0;transform:scaleX(0.93)">Unix (LF)</div>
<div class="t" style="left:1200px;top:711px;transform-origin:0 0;transform:scaleX(0.95)">UTF-8</div>
<div class="t" style="left:1320.5px;top:711px;transform-origin:0 0;transform:scaleX(0.91)">INS</div>
<div style="position:absolute;left:0px;top:728px;width:1366px;height:40px;background:#05070c"></div>
<svg style="left:16px;top:740px" width="17" height="17" viewBox="0 0 17 17"><path d="M0 1.5L6 0.9V7H0Z M7 0.7L16 -0.1V7H7Z M0 8H6V15.4L0 14.8Z M7 8H16V16.2L7 15.5Z" fill="#fff"/></svg>
<svg style="left:62px;top:738px" width="20" height="20"><circle cx="12.5" cy="7.5" r="5.2" fill="none" stroke="#fff" stroke-width="1.3"/><path d="M8.8 11.2L2.3 17.6" stroke="#fff" stroke-width="1.4"/></svg>
<svg style="left:111px;top:739px" width="18" height="18"><path d="M1.5 0.5V2.5H11.5V0.5M1.5 16.5V14.5H11.5V16.5" fill="none" stroke="#fff" stroke-width="1"/><rect x="1.5" y="4.5" width="10" height="8" fill="none" stroke="#fff"/><path d="M15.5 0.5V16.5" stroke="#fff"/><rect x="14" y="5" width="3" height="3" fill="#fff"/></svg>
<svg style="left:159px;top:736px" width="24" height="24"><defs><linearGradient id="pm" x1="0" y1="0" x2="0" y2="1"><stop offset="0" stop-color="#ff8c40"/><stop offset="1" stop-color="#ff5424"/></linearGradient></defs><circle cx="12" cy="12" r="12" fill="url(#pm)"/><path d="M5.2 18.5L11 14" stroke="#fff" stroke-width="1.2"/><path d="M10 15L16 9" stroke="#fff" stroke-width="3" stroke-dasharray="1 0.7"/><circle cx="17.6" cy="6.6" r="1.7" fill="none" stroke="#fff" stroke-width="1.1"/></svg>
<svg style="left:208px;top:736px" width="24" height="24" viewBox="0 0 24 24"><defs><linearGradient id="eg" x1="0.1" y1="0.2" x2="0.95" y2="0.6"><stop offset="0" stop-color="#38c6f4"/><stop offset="0.55" stop-color="#2fc0b8"/><stop offset="1" stop-color="#74e858"/></linearGradient><linearGradient id="eb" x1="0" y1="0" x2="0.3" y2="1"><stop offset="0" stop-color="#2a9ae8"/><stop offset="1" stop-color="#1470d0"/></linearGradient></defs><circle cx="12" cy="12" r="12" fill="url(#eg)"/><path d="M0.5 9C2 6 5 5 8.5 5.2C12 5.5 15 7.5 15.8 10.5L15.5 11.5C15.3 12.8 15.8 14 17.5 14.8C19.5 15.6 21.5 15.6 23.2 15L22.6 18C20.5 22 16.5 24 12 24C5.4 24 0 18.6 0 12C0 11 0.2 10 0.5 9Z" fill="url(#eb)"/><path d="M7.2 12C7.2 16.5 10.5 20.5 15.5 20.5C18.5 20.5 21 19.5 22.6 17.5C19 18.2 14.5 17.8 12.2 16.2C10 14.6 9.3 11.5 10.5 9.6C8.5 10 7.2 10.8 7.2 12Z" fill="#1560b8"/><path d="M10.5 9.6C12.5 8.8 15 9.5 15.5 11.5C15.3 12.8 15.8 14 17.5 14.8C19.5 15.6 21.5 15.6 23 15C22.9 15.8 22.8 16.7 22.6 17.5C19 18.2 14.5 17.8 12.2 16.2C10 14.6 9.3 11.5 10.5 9.6Z" fill="#05070c"/></svg>
<div style="position:absolute;left:200px;top:766px;width:40px;height:2px;background:#76b9ed"></div>
<div style="position:absolute;left:245px;top:728px;width:48px;height:38px;background:#333333"></div>
<div style="position:absolute;left:245px;top:766px;width:48px;height:2px;background:#76b9ed"></div>
<svg style="left:257px;top:735px" width="25" height="26" viewBox="0 0 25 26"><defs><linearGradient id="ng" x1="0" y1="0" x2="0" y2="1"><stop offset="0" stop-color="#f4fad0"/><stop offset="0.45" stop-color="#b6e04a"/><stop offset="1" stop-color="#38a818"/></linearGradient></defs><path d="M0.5 1.5H15L19.5 6V24.5H0.5Z" fill="#fff" stroke="#8a8a8a"/><path d="M15 1.5V6H19.5" fill="#eee" stroke="#9a9a9a"/><path d="M2 3.5H13" stroke="#9a9a9a" stroke-dasharray="1 1"/><rect x="1.5" y="9" width="17" height="14.5" fill="url(#ng)"/><rect x="1.5" y="22.5" width="17" height="1" fill="#2a8a10"/><rect x="4.5" y="7" width="1.8" height="11" fill="#151515"/><path d="M8 12.5H10M11 12.5H13" stroke="#222" stroke-width="1.6"/><path d="M12.5 22L22 3.5" stroke="#f2a900" stroke-width="2.6"/><path d="M12.5 22L14 19" stroke="#8a5a10" stroke-width="1.6"/><rect x="21" y="1" width="3" height="3" fill="#b01818"/></svg>
<svg style="left:307px;top:737px" width="22" height="22"><circle cx="11" cy="11" r="10.6" fill="#f2f2f2"/><path d="M11 4C15 8 15 13.5 11 18C7 13.5 7 8 11 4Z" fill="#13aa52"/><path d="M11 6V18" stroke="#0e8a40" stroke-width="0.6"/></svg>
<svg style="left:355px;top:738px" width="24" height="20" viewBox="0 0 24 20"><path d="M0.5 1.5H8L9.5 3H21.5V18.5H0.5Z" fill="#f4d27a" stroke="#d9a84a" stroke-width="0.6"/><rect x="1" y="4" width="20.5" height="14.5" fill="#fbe39a"/><rect x="1.5" y="1.5" width="4" height="1.4" fill="#6fb0e0"/><path d="M6 18.5V11H16V18.5H13V14H9V18.5Z" fill="#2e9ae0"/></svg>
<div style="position:absolute;left:347px;top:766px;width:31px;height:2px;background:#76b9ed"></div>
<div style="position:absolute;left:378px;top:766px;width:9px;height:2px;background:#4a7aa4"></div>
<svg style="left:404px;top:736px" width="25" height="25"><circle cx="12" cy="12" r="12" fill="#1aa6f4"/><path d="M4 11.8H17.5C18.3 10.5 19.5 10 21 10.6C20.5 11.8 19.7 12.3 18.8 12.4C17.5 15.8 14 17.2 10.5 17.2C6.5 17.2 4.3 15.2 4 11.8Z" fill="#fff"/><rect x="5.8" y="10.3" width="1.25" height="1.25" fill="#fff"/><rect x="7.7" y="10.3" width="1.25" height="1.25" fill="#fff"/><rect x="9.6" y="10.3" width="1.25" height="1.25" fill="#fff"/><rect x="11.7" y="10.3" width="1.25" height="1.25" fill="#fff"/><rect x="13.5" y="10.3" width="1.25" height="1.25" fill="#fff"/><rect x="7.7" y="8.2" width="1.25" height="1.25" fill="#fff"/><rect x="9.6" y="8.2" width="1.25" height="1.25" fill="#fff"/><rect x="11.7" y="8.2" width="1.25" height="1.25" fill="#fff"/><rect x="11.7" y="6.1" width="1.25" height="1.25" fill="#fff"/></svg>
<div style="position:absolute;left:396px;top:766px;width:40px;height:2px;background:#76b9ed"></div>
<svg style="left:452px;top:735px" width="26" height="25" viewBox="0 0 26 25"><defs><radialGradient id="gl" cx="0.4" cy="0.35" r="0.7"><stop offset="0" stop-color="#8fd0ff"/><stop offset="1" stop-color="#1a6fc0"/></radialGradient></defs><circle cx="18" cy="7.5" r="6.5" fill="url(#gl)"/><path d="M14.5 3.5C16.5 2.5 19 3.5 19.5 5.5C20 7.5 18 9 16 8.5C14.5 8 14 6 14.5 3.5Z M20 10C21.5 9.5 23.5 10.5 23.5 12L21 13Z" fill="#4cb040"/><path d="M1 7L9 5.5L20 9V22L9 24L1 21Z" fill="#a5432c"/><path d="M9 5.5V24" stroke="#6e2414" stroke-width="0.8"/><path d="M1 7L9 5.5L20 9L11.5 10Z" fill="#d08068"/><path d="M1 10.5L9 9.5L20 12.5M1 14L9 13.3L20 16M1 17.5L9 17L20 19.5" stroke="#d9a690" stroke-width="0.9" fill="none"/><path d="M4 8V11M4 14V17M13 10V13M16 14V17M13 17V20" stroke="#d9a690" stroke-width="0.7"/></svg>
<div style="position:absolute;left:445px;top:766px;width:40px;height:2px;background:#76b9ed"></div>
<svg style="left:501px;top:735px" width="26" height="26" viewBox="0 0 26 26"><path d="M13 1L19 7L13 13L7 7Z" fill="#f06a6a"/><path d="M19 7L25 13L19 19L13 13Z" fill="#6ac06a"/><path d="M13 13L19 19L13 25L7 19Z" fill="#f0d060"/><path d="M7 7L13 13L7 19L1 13Z" fill="#6aa0f0"/><path d="M8.6 4.5L13 18.5M12 9.5L18.6 11" stroke="#111" stroke-width="1.5" fill="none"/><circle cx="13" cy="19" r="1.7" fill="#111"/><circle cx="19" cy="11" r="1.7" fill="#111"/></svg>
<div style="position:absolute;left:494px;top:766px;width:31px;height:2px;background:#76b9ed"></div>
<div style="position:absolute;left:525px;top:766px;width:9px;height:2px;background:#4a7aa4"></div>
<svg style="left:1182px;top:743px" width="14" height="9"><path d="M1 7.5L7 1.5L13 7.5" fill="none" stroke="#fff" stroke-width="1.2"/></svg>
<svg style="left:1204px;top:741px" width="18" height="15"><rect x="4.5" y="2.5" width="12" height="8" fill="none" stroke="#fff"/><path d="M10.5 10.5V13.5M7 13.5H14M3.5 6V14M1.5 14H5.5" stroke="#fff" fill="none"/><rect x="0.5" y="0.5" width="5" height="4" fill="#05070c" stroke="#fff"/></svg>
<svg style="left:1228px;top:741px" width="8" height="15"><path d="M0.5 5V10H2.5L6.5 13.5V1.5L2.5 5Z" fill="none" stroke="#fff"/></svg>
<svg style="left:1236px;top:747px" width="10" height="10"><circle cx="4.8" cy="4.8" r="4.3" fill="#e02a2a"/><path d="M3 3L6.6 6.6M6.6 3L3 6.6" stroke="#fff" stroke-width="1.1"/></svg>
<div class="t" style="left:1261px;top:732px;color:#fff;font-size:12px;transform-origin:0 0;transform:scaleX(0.93)">1:18 PM</div>
<div class="t" style="left:1253px;top:750px;color:#fff;font-size:12px;transform-origin:0 0;transform:scaleX(0.965)">11/24/2021</div>
<svg style="left:1325px;top:740px" width="17" height="17"><path d="M0.5 0.5H15.5V12.5H10L8 14.5L6 12.5H0.5Z" fill="none" stroke="#fff"/></svg>
<div style="position:absolute;left:1362px;top:728px;width:1px;height:40px;background:#5a5c60"></div>
</body></html>
